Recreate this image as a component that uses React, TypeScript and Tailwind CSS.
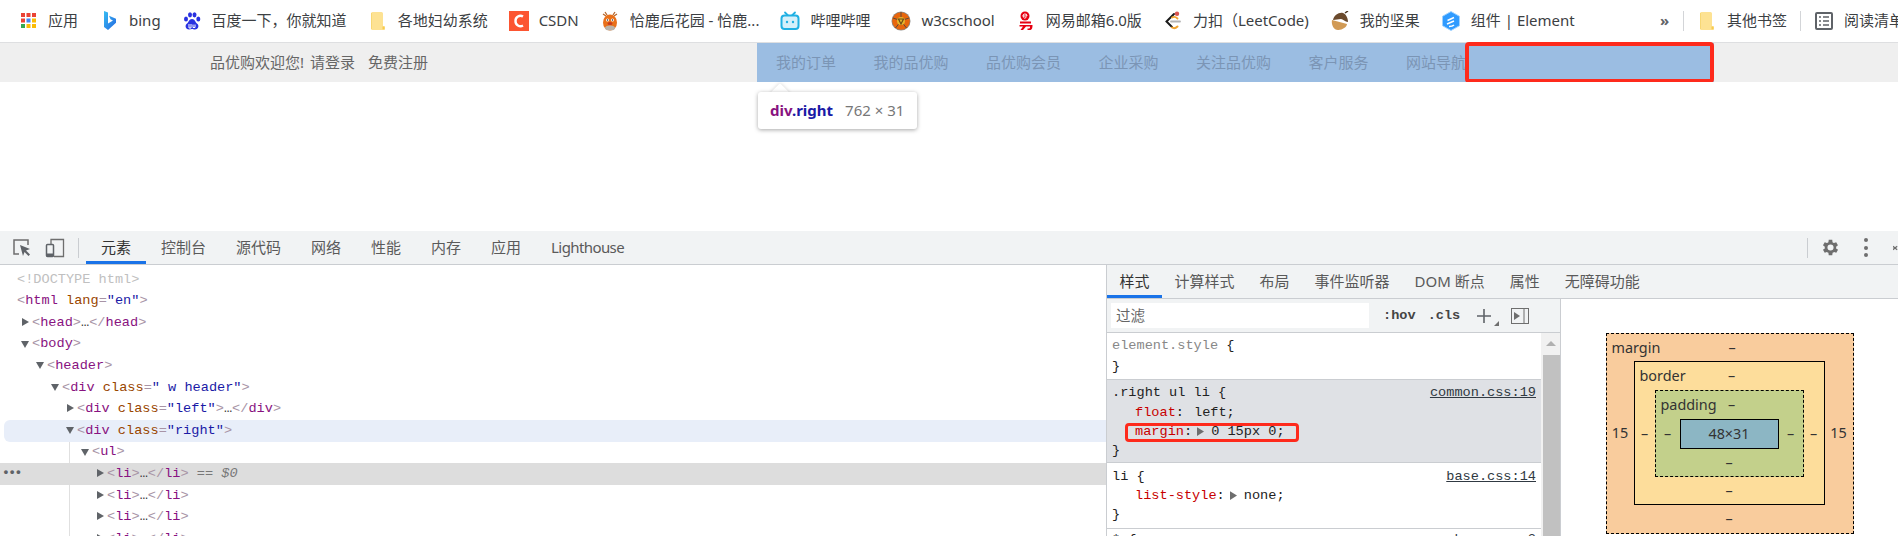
import React from "react";

const sans = "font-['Noto_Sans','Noto_Sans_CJK_SC',sans-serif]";
const mono = "font-['Liberation_Mono','Noto_Sans_CJK_SC',monospace]";

const Svg = ({ children }: { children: React.ReactNode }) => (
  <svg viewBox="0 0 20 20" className="w-[20px] h-[20px] shrink-0">{children}</svg>
);

const Apps = () => {
  const colors = ["#ea4335", "#ea4335", "#ea4335", "#ea4335", "#4285f4", "#fbbc05", "#34a853", "#fbbc05", "#fbbc05"];
  return (
    <Svg>
      {colors.map((c, i) => (
        <rect key={i} x={3 + (i % 3) * 5.5} y={2 + Math.floor(i / 3) * 5.5} width="4" height="4" fill={c} />
      ))}
    </Svg>
  );
};
const Bing = () => (
  <Svg>
    <defs>
      <linearGradient id="bg" x1="0" y1="0" x2="1" y2="1">
        <stop offset="0" stopColor="#37bdf3" />
        <stop offset="1" stopColor="#2468e0" />
      </linearGradient>
    </defs>
    <path d="M5 0l4 1.500v11l5-3-2.500-1.200L10 4.800l7 3v4L9 19l-4-3z" fill="url(#bg)" />
  </Svg>
);
const Baidu = () => (
  <Svg>
    <g fill="#2932e1">
      <ellipse cx="4" cy="8" rx="2" ry="2.600" />
      <ellipse cx="8" cy="3.800" rx="2" ry="2.600" />
      <ellipse cx="12.500" cy="3.800" rx="2" ry="2.600" />
      <ellipse cx="16.300" cy="8" rx="2" ry="2.600" />
      <path d="M10 8c3 0 3 3 5.500 5 2 2 .5 5.500-2.500 5.500-1.500 0-2-.5-3-.5s-2 .5-3 .5c-3 0-4.500-3.500-2.500-5.500C7 11 7 8 10 8z" />
    </g>
    <path d="M7 13v4h2v-4M11 13.500v3h2v-3" fill="none" stroke="#fff" strokeWidth="1" />
  </Svg>
);
const Folder = () => (
  <Svg>
    <path d="M3 2.500A1.500 1.500 0 0 1 4.500 1h9A1.500 1.500 0 0 1 15 2.500V15l2 .5V18a1 1 0 0 1-1 1H4.500A1.500 1.500 0 0 1 3 17.500z" fill="#fde293" />
    <path d="M14.500 15.500h2v2.800h-2z" fill="#f7cb4d" />
    <path d="M3.500 2v16" stroke="#f7d774" strokeWidth="1" />
  </Svg>
);
const Csdn = () => (
  <Svg>
    <rect width="20" height="20" fill="#fc5531" />
    <path d="M14 5.500A5 5 0 0 0 6.500 10 5 5 0 0 0 14 14.500" fill="none" stroke="#fff" strokeWidth="2.400" />
  </Svg>
);
const Deer = () => (
  <Svg>
    <path d="M5 1l2 3M15 1l-2 3M3 3l3 2M17 3l-3 2" stroke="#b5672c" strokeWidth="1.300" />
    <ellipse cx="10" cy="11.500" rx="7" ry="8" fill="#e8701a" />
    <ellipse cx="10" cy="17" rx="5" ry="2.500" fill="#b9b3ab" />
    <circle cx="7.500" cy="9" r="1.500" fill="#fff" />
    <circle cx="12.500" cy="9" r="1.500" fill="#fff" />
    <circle cx="7.500" cy="9" r=".7" fill="#222" />
    <circle cx="12.500" cy="9" r=".7" fill="#222" />
    <ellipse cx="10" cy="12.500" rx="2.500" ry="1.500" fill="#c83a1e" />
  </Svg>
);
const Bili = () => (
  <Svg>
    <path d="M5 1.500l3 3M15 1.500l-3 3" stroke="#20b0e3" strokeWidth="1.800" strokeLinecap="round" />
    <rect x="1.500" y="4.500" width="17" height="13.500" rx="3" fill="#d5f0fa" stroke="#20b0e3" strokeWidth="2" />
    <circle cx="7" cy="11" r="1.200" fill="#20b0e3" />
    <circle cx="13" cy="11" r="1.200" fill="#20b0e3" />
  </Svg>
);
const W3c = () => (
  <Svg>
    <circle cx="10" cy="10" r="9.500" fill="#8a8a88" />
    <circle cx="10" cy="10" r="8.800" fill="#e8660c" />
    <path d="M10 1v6M2 7l6 2M4.500 17l4-5M15.500 17l-4-5M18 7l-6 2" stroke="#5e4a3a" strokeWidth="1" />
    <circle cx="10" cy="10" r="4" fill="#e5b52c" />
    <path d="M7.500 8h5L10 13z" fill="none" stroke="#6a4a18" strokeWidth="1.200" />
  </Svg>
);
const Mail163 = () => (
  <Svg>
    <circle cx="9" cy="5" r="4.500" fill="#e60012" />
    <path d="M7 5h4M11 5a2 2 0 1 0-.7 1.500" fill="none" stroke="#fff" strokeWidth="1" />
    <path d="M4 10.500h11v2H4zM3.500 14h13c0 3-.5 5-3 5h-2v-1.500h1.500c1 0 1-1 1-2H10l-3 3.500H4.500L7 15.500H3.500z" fill="#e60012" />
  </Svg>
);
const Leet = () => (
  <Svg>
    <path d="M11 3L3.500 10.500 9 16" fill="none" stroke="#1a1a1a" strokeWidth="2" strokeLinecap="round" />
    <path d="M8 10.500h9" stroke="#b3b3b3" strokeWidth="1.800" strokeLinecap="round" />
    <path d="M9 16.500c2 1.200 4 .5 5.500-1" fill="none" stroke="#f0a32f" strokeWidth="2" strokeLinecap="round" />
    <path d="M9 6.500c2-1.200 4-.5 5.500 1" fill="none" stroke="#f0a32f" strokeWidth="1.800" strokeLinecap="round" />
    <circle cx="14" cy="2.800" r="2.200" fill="#d9534f" />
  </Svg>
);
const Acorn = () => (
  <Svg>
    <path d="M2 9c-1 5 2 10 6 10 4 .3 9-3 9-6z" fill="#d19a55" />
    <path d="M3 9c1-5 6-8 10-7 3 1 5 5 5 9-3 0-5-3-7-3-3 0-5 1-8 1z" fill="#6b4a2c" />
    <path d="M15 2l3-2" stroke="#4a3420" strokeWidth="1.500" />
  </Svg>
);
const Element = () => (
  <Svg>
    <path d="M10 .5l8.500 4.800v9.400L10 19.500l-8.500-4.800V5.300z" fill="#2f9bff" stroke="#9fd2ff" strokeWidth="1" />
    <path d="M6 13l7-3M6.500 9.500L13 6.500M8 15.500c2 0 4-.5 5-1.500" fill="none" stroke="#fff" strokeWidth="1.500" />
  </Svg>
);
const Reading = () => (
  <Svg>
    <rect x="2" y="2" width="16" height="16" rx="1" fill="none" stroke="#5f6368" strokeWidth="2" />
    <path d="M5 6h2M9 6h6M5 10h2M9 10h6M5 14h2M9 14h6" stroke="#5f6368" strokeWidth="1.500" />
  </Svg>
);

const bookmarks: [React.ReactNode, string][] = [
  [<Apps />, "应用"],
  [<Bing />, "bing"],
  [<Baidu />, "百度一下，你就知道"],
  [<Folder />, "各地妇幼系统"],
  [<Csdn />, "CSDN"],
  [<Deer />, "恰鹿后花园 - 恰鹿..."],
  [<Bili />, "哔哩哔哩"],
  [<W3c />, "w3cschool"],
  [<Mail163 />, "网易邮箱6.0版"],
  [<Leet />, "力扣（LeetCode)"],
  [<Acorn />, "我的坚果"],
  [<Element />, "组件 | Element"],
];

const Bookmark = ({ icon, label }: { icon: React.ReactNode; label: string }) => (
  <div className="flex items-center gap-[10px] shrink-0 whitespace-nowrap">
    {icon}
    <span>{label}</span>
  </div>
);

const BookmarkBar = () => (
  <div className={`${sans} flex items-center h-[43px] pl-[18px] pb-[1px] border-b border-[#dedfe1] text-[15px] text-[#3c4043] bg-white overflow-hidden`}>
    <div className="flex items-center gap-[21px] w-[1640px] shrink-0">
      {bookmarks.map(([icon, label]) => (
        <Bookmark key={label} icon={icon} label={label} />
      ))}
    </div>
    <span className="shrink-0 text-[15px] text-[#5f6368] font-bold w-[25px] pr-[12px] text-center">»</span>
    <div className="w-px h-[20px] bg-[#d3d5d8] shrink-0" />
    <div className="ml-[13px] shrink-0">
      <Bookmark icon={<Folder />} label="其他书签" />
    </div>
    <div className="w-px h-[20px] bg-[#d3d5d8] shrink-0 ml-[13px]" />
    <div className="ml-[13px] shrink-0">
      <Bookmark icon={<Reading />} label="阅读清单" />
    </div>
  </div>
);

const navItems = ["我的订单", "我的品优购", "品优购会员", "企业采购", "关注品优购", "客户服务", "网站导航"];

const PageHeader = () => (
  <div className={`${sans} relative flex h-[39px] bg-[#efefef] text-[15px] text-[#666]`}>
    <div className="w-[757px] pl-[210px] flex items-center shrink-0">
      <span>品优购欢迎您!</span>
      <span className="ml-[6px]">请登录</span>
      <span className="ml-[13px]">免费注册</span>
    </div>
    <div className="w-[957px] bg-[#9bbde2] flex items-center pl-[19px] gap-[37.500px] text-[#7b95b5]">
      {navItems.map((n) => (
        <span key={n} className="whitespace-nowrap">{n}</span>
      ))}
    </div>
    <div className="absolute left-[1465px] top-[-1px] w-[249px] h-[41px] border-[4px] border-[#fe2a1c] rounded-[4px]" />
  </div>
);

const PageBlank = () => (
  <div className="relative h-[149px] bg-white">
    <div className="absolute left-[773px] top-[4px] w-[14px] h-[14px] bg-white rotate-45 rounded-[2px] shadow-[0_0_4px_rgba(0,0,0,0.18)]" />
    <div className={`${sans} absolute left-[758px] top-[10px] w-[159px] h-[37px] bg-white rounded-[3px] shadow-[0_1px_4px_rgba(0,0,0,0.35)] flex items-center pl-[12px] gap-[12px] text-[15px]`}>
      <span className="font-bold">
        <span className="text-[#881280]">div</span>
        <span className="text-[#1a1aa6]">.right</span>
      </span>
      <span className="text-[#777]">762 × 31</span>
    </div>
  </div>
);

const mainTabs = ["元素", "控制台", "源代码", "网络", "性能", "内存", "应用", "Lighthouse"];
const sideTabs = ["样式", "计算样式", "布局", "事件监听器", "DOM 断点", "属性", "无障碍功能"];

const Toolbar = () => (
  <div className={`${sans} flex items-stretch h-[34px] bg-[#f1f3f4] border-b border-[#cacdd1] text-[15px] text-[#5a5a5a]`}>
    <div className="flex items-center pl-[12px] gap-[13px] w-[78px] shrink-0">
      <svg viewBox="0 0 20 20" className="w-[20px] h-[20px] shrink-0">
        <path d="M7 16H2V2h14v5" fill="none" stroke="#6e6e6e" strokeWidth="1.500" />
        <path d="M8 7l10 4-4 1.500 4 4-1.500 1.500-4-4L11 18z" fill="#5f6368" />
      </svg>
      <svg viewBox="0 0 20 20" className="w-[20px] h-[20px] shrink-0">
        <path d="M6 6V1.500h12.500v17H9" fill="none" stroke="#6e6e6e" strokeWidth="1.300" />
        <rect x="1.500" y="6.500" width="7" height="12" rx="1" fill="none" stroke="#5f6368" strokeWidth="1.500" />
        <rect x="1.500" y="15.500" width="7" height="3" fill="#5f6368" />
      </svg>
    </div>
    <div className="w-px h-[20px] self-center bg-[#cacdd1] shrink-0" />
    <div className="flex ml-[7px]">
      {mainTabs.map((t, i) => (
        <div
          key={t}
          className={`px-[15px] flex items-center whitespace-nowrap border-b-[3px] pt-[2px] ${i === 0 ? "border-[#1a73e8] text-[#333]" : "border-transparent"} ${t === "Lighthouse" ? "tracking-[-0.6px]" : ""}`}
        >
          {t}
        </div>
      ))}
    </div>
    <div className="ml-auto flex items-center">
      <div className="w-px h-[20px] bg-[#cacdd1] mr-[12px]" />
      <svg viewBox="0 0 24 24" className="w-[21px] h-[21px] mr-[23px]" fill="#6e6e6e">
        <path d="M19.400 13a7.500 7.500 0 0 0 0-2l2.100-1.600-2-3.500-2.500 1a7.500 7.500 0 0 0-1.700-1L15 3.200h-4L10.600 5.900a7.500 7.500 0 0 0-1.700 1l-2.500-1-2 3.500L6.500 11a7.500 7.500 0 0 0 0 2l-2.100 1.600 2 3.500 2.500-1a7.500 7.500 0 0 0 1.700 1l.4 2.700h4l.4-2.700a7.500 7.500 0 0 0 1.700-1l2.500 1 2-3.500zM13 15.500a3.500 3.500 0 1 1 0-7 3.500 3.500 0 0 1 0 7z" transform="translate(-1 0)" />
      </svg>
      <div className="flex flex-col gap-[3.500px] mr-[25px]">
        <span className="w-[4px] h-[4px] rounded-full bg-[#6e6e6e]" />
        <span className="w-[4px] h-[4px] rounded-full bg-[#6e6e6e]" />
        <span className="w-[4px] h-[4px] rounded-full bg-[#6e6e6e]" />
      </div>
      <svg viewBox="0 0 12 12" className="w-[5px] h-[12px]">
        <path d="M0 2l10 8M10 2L0 10" stroke="#6e6e6e" strokeWidth="3" />
      </svg>
    </div>
  </div>
);

const T = ({ c, children }: { c: string; children: React.ReactNode }) => <span className={c}>{children}</span>;
const P = ({ children }: { children: React.ReactNode }) => <T c="text-[#a894a6]">{children}</T>;
const Tag = ({ children }: { children: React.ReactNode }) => <T c="text-[#881280]">{children}</T>;
const Attr = ({ children }: { children: React.ReactNode }) => <T c="text-[#994500]">{children}</T>;
const Val = ({ children }: { children: React.ReactNode }) => <T c="text-[#1a1aa6]">{children}</T>;

const Caret = ({ open }: { open?: boolean }) => (
  <svg viewBox="0 0 8 8" className="w-[8px] h-[8px] shrink-0 -mt-[2px]">
    <path d={open ? "M0 1h8L4 8z" : "M1 0l7 4-7 4z"} fill="#5f6368" />
  </svg>
);

const Row = ({
  x,
  caret,
  bg = "",
  children,
}: {
  x: string;
  caret?: "open" | "closed";
  bg?: string;
  children: React.ReactNode;
}) => (
  <div className={`flex items-center h-[21.600px] ${x} ${bg}`}>
    {caret && (
      <span className="w-[11px] ml-[-11px] shrink-0 flex items-center">
        <Caret open={caret === "open"} />
      </span>
    )}
    <span className="whitespace-pre">{children}</span>
  </div>
);

const LiRow = ({ selected }: { selected?: boolean }) => (
  <Row x="pl-[107px]" caret="closed" bg={selected ? "bg-[#dddddd]" : ""}>
    <P>&lt;</P>
    <Tag>li</Tag>
    <P>&gt;</P>…<P>&lt;/</P>
    <Tag>li</Tag>
    <P>&gt;</P>
    {selected && <T c="text-[#777] italic"> == $0</T>}
  </Row>
);

const DomTree = () => (
  <div className={`${mono} relative w-[1106px] shrink-0 pt-[4px] text-[13.600px] text-[#333] overflow-hidden`}>
    <div className="absolute left-[69px] top-[177px] bottom-0 w-px bg-[#e0e0e0]" />
    <Row x="pl-[17px]"><T c="text-[#c0c0c0]">&lt;!DOCTYPE html&gt;</T></Row>
    <Row x="pl-[17px]"><P>&lt;</P><Tag>html</Tag> <Attr>lang</Attr><P>=</P><Val>"en"</Val><P>&gt;</P></Row>
    <Row x="pl-[32px]" caret="closed"><P>&lt;</P><Tag>head</Tag><P>&gt;</P>…<P>&lt;/</P><Tag>head</Tag><P>&gt;</P></Row>
    <Row x="pl-[32px]" caret="open"><P>&lt;</P><Tag>body</Tag><P>&gt;</P></Row>
    <Row x="pl-[47px]" caret="open"><P>&lt;</P><Tag>header</Tag><P>&gt;</P></Row>
    <Row x="pl-[62px]" caret="open"><P>&lt;</P><Tag>div</Tag> <Attr>class</Attr><P>=</P><Val>" w header"</Val><P>&gt;</P></Row>
    <Row x="pl-[77px]" caret="closed"><P>&lt;</P><Tag>div</Tag> <Attr>class</Attr><P>=</P><Val>"left"</Val><P>&gt;</P>…<P>&lt;/</P><Tag>div</Tag><P>&gt;</P></Row>
    <div className="ml-[4px] rounded-l-[6px] bg-[#e8eef9]">
      <Row x="pl-[73px]" caret="open"><P>&lt;</P><Tag>div</Tag> <Attr>class</Attr><P>=</P><Val>"right"</Val><P>&gt;</P></Row>
    </div>
    <Row x="pl-[92px]" caret="open"><P>&lt;</P><Tag>ul</Tag><P>&gt;</P></Row>
    <div className="relative">
      <LiRow selected />
      <span className="absolute left-[2px] top-[0px] text-[#5f6368] font-bold leading-[20px] text-[13px] tracking-[-1.500px]">•••</span>
    </div>
    <LiRow />
    <LiRow />
    <LiRow />
  </div>
);

const Source = ({ children }: { children: React.ReactNode }) => (
  <span className="underline text-[#303942]">{children}</span>
);
const Expander = () => (
  <svg viewBox="0 0 8 10" className="inline-block w-[7px] h-[9px] ml-[5px] mr-[7px] align-[-1px]">
    <path d="M0 0l8 5-8 5z" fill="#6e6e6e" />
  </svg>
);

const StylesPane = () => (
  <div className={`${mono} relative flex-1 min-w-0 text-[13.600px] leading-[19px] text-[#222] whitespace-pre overflow-hidden`}>
    <div className="flex items-center h-[34px] bg-[#f1f3f4] border-b border-[#cacdd1] pl-[4px] pr-[30px]">
      <div className={`${sans} w-[258px] h-[25px] bg-white flex items-center pl-[5px] text-[14.500px] text-[#666] shrink-0`}>过滤</div>
      <span className="ml-[14px] font-bold text-[#444]">:hov</span>
      <span className="ml-[12px] font-bold text-[#444]">.cls</span>
      <svg viewBox="0 0 14 14" className="w-[14px] h-[14px] ml-[17px] shrink-0">
        <path d="M7 0v14M0 7h14" stroke="#5f6368" strokeWidth="1.600" />
      </svg>
      <svg viewBox="0 0 6 6" className="w-[5px] h-[5px] mt-[16px] ml-[3px] shrink-0">
        <path d="M6 0v6H0z" fill="#6e6e6e" />
      </svg>
      <svg viewBox="0 0 18 16" className="w-[18px] h-[16px] ml-[12px] shrink-0">
        <rect x=".5" y=".5" width="17" height="15" fill="none" stroke="#6e6e6e" />
        <path d="M13 0v16" stroke="#6e6e6e" />
        <path d="M3 4l6 4-6 4z" fill="#6e6e6e" />
      </svg>
    </div>
    <div className="h-[47px] border-b border-[#cacdd1] pl-[5px] pt-[3px] pr-[24px]">
      <div><T c="text-[#888]">element.style</T> {"{"}</div>
      <div className="mt-[2px]">{"}"}</div>
    </div>
    <div className="h-[83px] border-b border-[#cacdd1] pl-[5px] pt-[3px] pr-[24px] bg-[#dfe1e5] leading-[19px]">
      <div className="flex justify-between"><span>.right ul li {"{"}</span><Source>common.css:19</Source></div>
      <div className="pl-[23px] mt-[1px]"><T c="text-[#c80000]">float</T>:<span className="ml-[10px]">left;</span></div>
      <div className="pl-[23px]"><T c="text-[#c80000]">margin</T>:<Expander />0 15px 0;</div>
      <div>{"}"}</div>
    </div>
    <div className="h-[66px] border-b border-[#cacdd1] pl-[5px] pt-[4px] pr-[24px] leading-[19px]">
      <div className="flex justify-between"><span>li {"{"}</span><Source>base.css:14</Source></div>
      <div className="pl-[23px]"><T c="text-[#c80000]">list-style</T>:<Expander />none;</div>
      <div>{"}"}</div>
    </div>
    <div className="pl-[5px] pt-[1px] pr-[24px] flex justify-between">
      <span>* {"{"}</span>
      <Source>base.css:2</Source>
    </div>
    <div className="absolute left-[18px] top-[124px] w-[174px] h-[19px] border-[3px] border-[#fe2a1c] rounded-[4px]" />
    <div className="absolute right-0 top-[34px] bottom-0 w-[19px] bg-[#f1f1f1] flex flex-col items-center pt-[8px]">
      <svg viewBox="0 0 10 5" className="w-[10px] h-[5px] shrink-0">
        <path d="M0 5l5-5 5 5z" fill="#b0b0b0" />
      </svg>
      <div className="mt-[9px] ml-[1px] w-[17px] flex-1 bg-[#c1c1c1]" />
    </div>
  </div>
);

const Dash = () => <span>–</span>;

const Side = ({ children }: { children: React.ReactNode }) => (
  <div className="flex items-center justify-center">{children}</div>
);
const TopLabel = ({ label }: { label: string }) => (
  <div className="col-span-3 grid grid-cols-[1fr_auto_1fr] items-center pl-[5px]">
    <span className="justify-self-start">{label}</span>
    <Dash />
    <span />
  </div>
);

const BoxModel = () => (
  <div className={`${sans} flex-1 flex justify-center pt-[34px] bg-white border-l border-[#cacdd1] text-[14.400px] leading-[20px] text-[#333]`}>
    <div className="grid grid-cols-[27px_191px_28px] grid-rows-[27px_144px_28px] w-[248px] h-[201px] bg-[#f9cc9d] border border-dashed border-black shrink-0">
      <TopLabel label="margin" />
      <Side>15</Side>
      <div className="grid grid-cols-[20px_149px_20px] grid-rows-[28px_87px_27px] bg-[#fddd9b] border border-black">
        <TopLabel label="border" />
        <Side><Dash /></Side>
        <div className="grid grid-cols-[24px_99px_24px] grid-rows-[28px_30px_27px] bg-[#c3d08b] border border-dashed border-black">
          <TopLabel label="padding" />
          <Side><Dash /></Side>
          <div className="flex items-center justify-center bg-[#8cb6c4] border border-black">48×31</div>
          <Side><Dash /></Side>
          <div className="col-start-2 flex items-center justify-center"><Dash /></div>
        </div>
        <Side><Dash /></Side>
        <div className="col-start-2 flex items-center justify-center"><Dash /></div>
      </div>
      <Side>15</Side>
      <div className="col-start-2 flex items-center justify-center"><Dash /></div>
    </div>
  </div>
);

const Sidebar = () => (
  <div className="flex-1 min-w-0 flex flex-col border-l border-[#cacdd1]">
    <div className={`${sans} flex h-[34px] shrink-0 bg-[#f1f3f4] border-b border-[#cacdd1] text-[15px] text-[#5a5a5a]`}>
      {sideTabs.map((t, i) => (
        <div key={t} className={`px-[12.500px] flex items-center whitespace-nowrap border-b-[3px] pt-[2px] ${i === 0 ? "border-[#1a73e8] text-[#333]" : "border-transparent"}`}>
          {t}
        </div>
      ))}
    </div>
    <div className="flex flex-1 min-h-0">
      <div className="w-[453px] shrink-0 flex"><StylesPane /></div>
      <BoxModel />
    </div>
  </div>
);

export default function App() {
  return (
    <div className="w-[1898px] h-[536px] overflow-hidden bg-white flex flex-col">
      <BookmarkBar />
      <PageHeader />
      <PageBlank />
      <Toolbar />
      <div className="flex flex-1 min-h-0">
        <DomTree />
        <Sidebar />
      </div>
    </div>
  );
}
